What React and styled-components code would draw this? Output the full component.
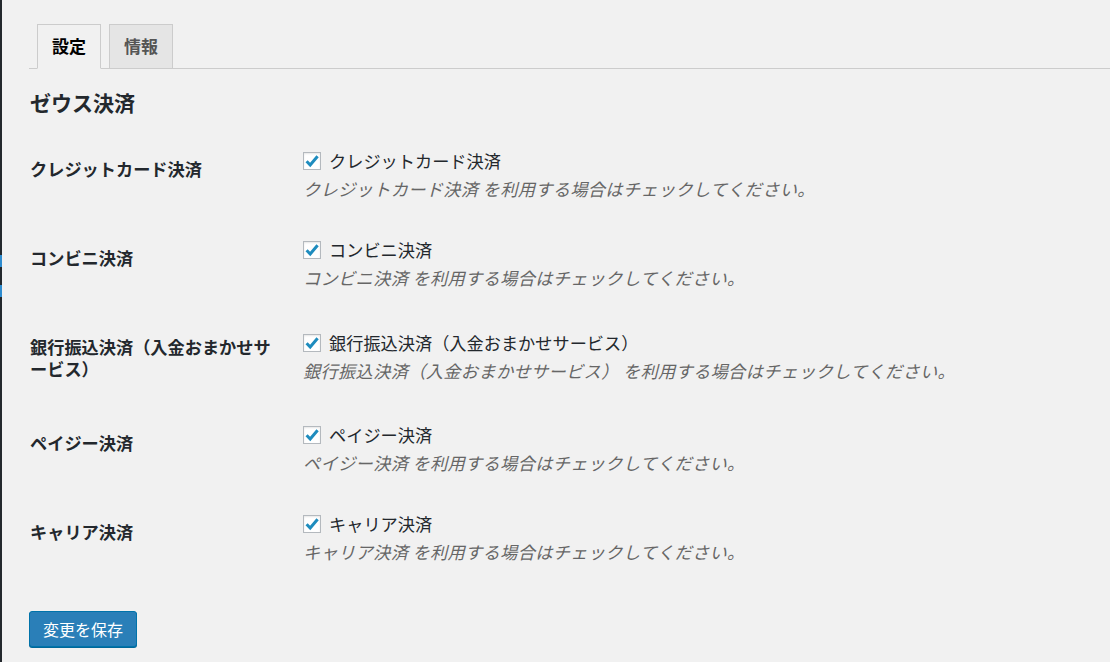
import React from 'react'
import styled, { createGlobalStyle } from 'styled-components'

const GlobalStyle = createGlobalStyle`
  html, body {
    margin: 0;
    padding: 0;
    background: #f1f1f1;
  }
  body {
    font-family: "Noto Sans CJK JP", "Noto Sans", sans-serif;
    color: #23282d;
  }
`

const Page = styled.div`
  display: flex;
  min-height: 662px;
  background: #f1f1f1;
`

const Strip = styled.div`
  display: flex;
  flex-direction: column;
  width: 2px;
  flex-shrink: 0;
  background: #23282d;
`

const Segment = styled.div`
  height: ${p => p.$h}px;
  background: ${p => p.$color};
  flex-shrink: 0;
`

const Main = styled.div`
  flex: 1;
  padding: 24px 0 0 27px;
`

const TabBar = styled.nav`
  display: flex;
  gap: 8px;
  padding-left: 8px;
  border-bottom: 1px solid #ccc;
  height: 44px;
`

const Tab = styled.div`
  box-sizing: border-box;
  height: ${p => (p.$active ? 45 : 44)}px;
  padding: 0 14px;
  border: 1px solid #ccc;
  border-bottom: ${p => (p.$active ? '1px solid #f1f1f1' : 'none')};
  background: ${p => (p.$active ? '#f1f1f1' : '#e5e5e5')};
  color: ${p => (p.$active ? '#000' : '#555')};
  font-size: 17px;
  font-weight: 700;
  line-height: 42px;
`

const Content = styled.div`
  padding-left: 0;
`

const Heading = styled.h2`
  margin: 20px 0 16px 1px;
  font-size: 21px;
  font-weight: 700;
  line-height: 27px;
  color: #23282d;
`

const FormTable = styled.div`
  display: grid;
  grid-template-columns: 274px 1fr;
`

const RowLabel = styled.div`
  align-self: start;
  padding: 26px 27px 26px 1px;
  font-size: 17.2px;
  font-weight: 700;
  line-height: 22px;
  color: #23282d;
`

const Field = styled.div`
  align-self: center;
  padding: 18px 0;
`

const CheckLine = styled.label`
  display: flex;
  align-items: center;
  height: 22px;
  font-size: 17.2px;
  line-height: 22px;
  color: #23282d;
`

const Box = styled.span`
  box-sizing: border-box;
  display: inline-flex;
  align-items: center;
  justify-content: center;
  width: 18px;
  height: 18px;
  margin-right: 8px;
  background: #fff;
  border: 1px solid #b4b9be;
  box-shadow: inset 0 1px 2px rgba(0, 0, 0, 0.1);
`

const Description = styled.p`
  margin: 6px 0 3px;
  font-size: 17.2px;
  font-style: italic;
  letter-spacing: 0.35px;
  line-height: 22px;
  color: #666;
`

const SaveButton = styled.button`
  box-sizing: border-box;
  margin-top: 27px;
  height: 36px;
  padding: 0 13px;
  border: 1px solid #0073aa;
  border-radius: 3px;
  background: #2a7fb8;
  box-shadow: 0 1px 0 #006799;
  color: #fff;
  font-family: "Noto Sans CJK JP", "Noto Sans", sans-serif;
  font-size: 16px;
  line-height: 34px;
  cursor: pointer;
`

const CheckMark = () => (
  <svg width='16' height='16' viewBox='0 0 16 16'>
    <path d='M2.6 8.2 L6.2 12 L13.6 3.2' fill='none' stroke='#1e8cbe' strokeWidth='3' strokeLinecap='butt' strokeLinejoin='miter' />
  </svg>
)

const methods = [
  'クレジットカード決済',
  'コンビニ決済',
  '銀行振込決済（入金おまかせサービス）',
  'ペイジー決済',
  'キャリア決済'
]

export default function App () {
  return (
    <>
      <GlobalStyle />
      <Page>
        <Strip>
          <Segment $h={255} $color='#23282d' />
          <Segment $h={12} $color='#2e8ccf' />
          <Segment $h={18} $color='#23282d' />
          <Segment $h={12} $color='#2e8ccf' />
        </Strip>
        <Main>
          <TabBar>
            <Tab $active>設定</Tab>
            <Tab>情報</Tab>
          </TabBar>
          <Content>
            <Heading>ゼウス決済</Heading>
            <FormTable>
              {methods.map(name => (
                <React.Fragment key={name}>
                  <RowLabel>{name}</RowLabel>
                  <Field>
                    <CheckLine>
                      <Box><CheckMark /></Box>
                      {name}
                    </CheckLine>
                    <Description>{name} を利用する場合はチェックしてください。</Description>
                  </Field>
                </React.Fragment>
              ))}
            </FormTable>
            <SaveButton>変更を保存</SaveButton>
          </Content>
        </Main>
      </Page>
    </>
  )
}
